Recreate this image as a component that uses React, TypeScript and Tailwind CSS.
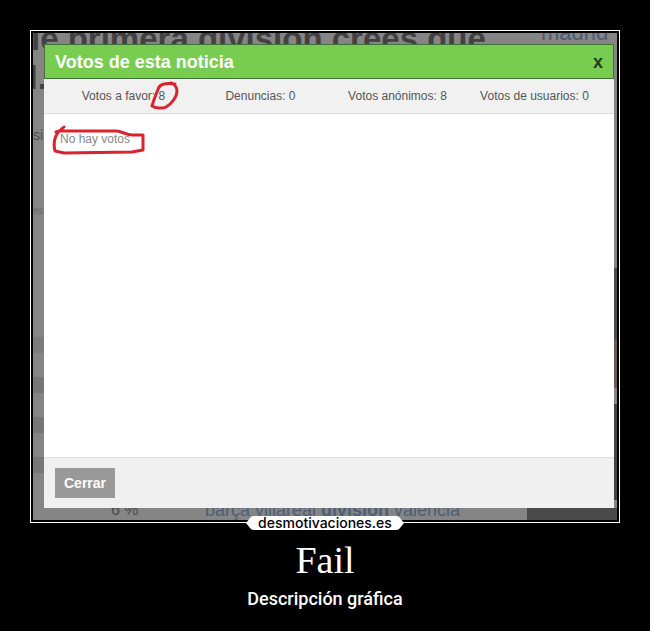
import React from 'react';

const stats = [
  { label: 'Votos a favor', value: 8, marked: true },
  { label: 'Denuncias', value: 0 },
  { label: 'Votos anónimos', value: 8 },
  { label: 'Votos de usuarios', value: 0 },
];

// The dimmed page that stays visible around the dialog
const Backdrop: React.FC = () => (
  <div className="absolute inset-0 flex flex-col justify-between overflow-hidden bg-[#858585]" aria-hidden="true">
    <div className="-mt-3 flex items-start justify-between whitespace-nowrap">
      <p className="-ml-0.5 text-[33px] leading-9 font-bold text-[#414141]">le primera division crees que</p>
      <p className="w-[76px] text-[22px] leading-6 text-[#4d5b78]">madrid</p>
    </div>
    <div className="flex grow justify-between">
      <div className="w-3 text-[#505050]">
        <p className="-ml-4 text-[34px] leading-10 font-bold text-[#414141]">d.</p>
        <p className="mt-7 text-[14px] leading-5">si</p>
        <p className="mt-14 text-[10px] leading-5 text-[#6b6b6b]">es</p>
        <div className="mt-29 space-y-6">
          <div className="h-4 bg-[#7b7b7b]" />
          <div className="h-4 bg-[#777777]" />
          <div className="h-4 bg-[#777777]" />
          <div className="h-4 bg-[#777777]" />
        </div>
      </div>
      <div className="flex w-1 flex-col justify-end">
        <div className="h-18 bg-[#4c4c4c]" />
        <div className="h-12 bg-[#6b5a55]" />
        <div className="h-4" />
        <div className="h-24 bg-[#444444]" />
      </div>
    </div>
    <div className="flex items-end whitespace-nowrap leading-5">
      <p className="w-[172px] pl-[78px] text-[16px] text-[#4c4c4c]">6 %</p>
      <p className="grow text-[18px] text-[#4d5f78]">
        barça villareal <b>division</b> valencia
      </p>
      <div className="h-3 w-[90px] bg-[#4a4a4a]" />
    </div>
  </div>
);

const ValueMark: React.FC = () => (
  <svg className="absolute -right-4 -top-2 h-8 w-8" viewBox="0 0 32 32" fill="none" aria-hidden="true">
    <path
      d="M26 3 C20 2 13 2 10 6 C8 11 5 18 3 25 C6 27 13 28 17 26 C23 23 28 15 28 10 C28 6 25 3 22 2"
      stroke="#d8242f"
      strokeWidth="3"
      strokeLinecap="round"
      strokeLinejoin="round"
    />
  </svg>
);

const EmptyMark: React.FC = () => (
  <svg className="absolute -left-2 -top-2 h-8 w-24" viewBox="0 0 96 32" fill="none" aria-hidden="true">
    <path
      d="M12 4 C10 5 9 6 8 8 M4 9 L7 8 C3 13 1 20 3 28 L12 30 L80 29 L91 27 L91 12 L80 12 C74 12 70 8 64 8 L7 8"
      stroke="#d8242f"
      strokeWidth="3"
      strokeLinecap="round"
      strokeLinejoin="round"
    />
  </svg>
);

const VotesDialog: React.FC = () => (
  <section role="dialog" aria-labelledby="votes-title" className="relative flex grow flex-col bg-white">
    <header className="flex h-[35px] items-center justify-between border border-[#41723a] bg-[#78cc50] px-[10px]">
      <h1 id="votes-title" className="text-[18px] leading-6 font-bold text-white">
        Votos de esta noticia
      </h1>
      <button type="button" className="text-[18px] leading-6 font-bold text-[#263c1e]">
        x
      </button>
    </header>

    <ul className="grid h-[35px] grid-cols-4 items-center border-b border-[#dddddd] bg-[#f1f1f1] px-[11px] text-[12px] leading-4 text-[#555555]">
      {stats.map((stat) => (
        <li key={stat.label} className="text-center whitespace-nowrap">
          {stat.label}:{' '}
          <span className="relative">
            {stat.value}
            {stat.marked && <ValueMark />}
          </span>
        </li>
      ))}
    </ul>

    <div className="grow px-4 py-[17px]">
      <p className="relative flex text-[12px] leading-4 text-[#888888]">
        No hay votos
        <EmptyMark />
      </p>
    </div>

    <footer className="border-t border-[#dddddd] bg-[#f0f0f0] px-[11px] py-[10px]">
      <button type="button" className="block h-[30px] w-[60px] bg-[#999999] text-[14px] leading-5 font-bold text-white">
        Cerrar
      </button>
    </footer>
  </section>
);

const Brand: React.FC = () => (
  <a href="#" className="relative -mt-2 flex h-4 w-[158px] items-center justify-center self-center">
    <svg className="absolute inset-0 h-full w-full" viewBox="0 0 158 16" aria-hidden="true">
      <path d="M0 8 L4 3 Q5 1 8 1 H150 Q153 1 154 3 L158 8 L154 13 Q153 15 150 15 H8 Q5 15 4 13 Z" fill="#fff" />
    </svg>
    <span className="relative font-['Inter','Liberation_Sans',sans-serif] text-[14px] leading-4 font-medium text-black">
      desmotivaciones.es
    </span>
  </a>
);

const App: React.FC = () => {
  return (
    <main className="min-h-screen bg-black px-[30px] pt-[30px] pb-5 font-['Liberation_Sans',Arial,sans-serif]">
      <figure className="flex flex-col">
        <div className="border border-white p-[2px]">
          <div className="relative flex min-h-[487px] flex-col pt-[11px] pr-[3px] pb-3 pl-[11px]">
            <Backdrop />
            <VotesDialog />
          </div>
        </div>
        <Brand />
        <figcaption className="pt-2 text-center text-white">
          <h2 className="font-['Liberation_Serif',serif] text-[38px] leading-[42px]">Fail</h2>
          <p className="mt-[6px] font-['Roboto',sans-serif] text-[18px] leading-6 font-medium">Descripción gráfica</p>
        </figcaption>
      </figure>
    </main>
  );
};

export default App;
